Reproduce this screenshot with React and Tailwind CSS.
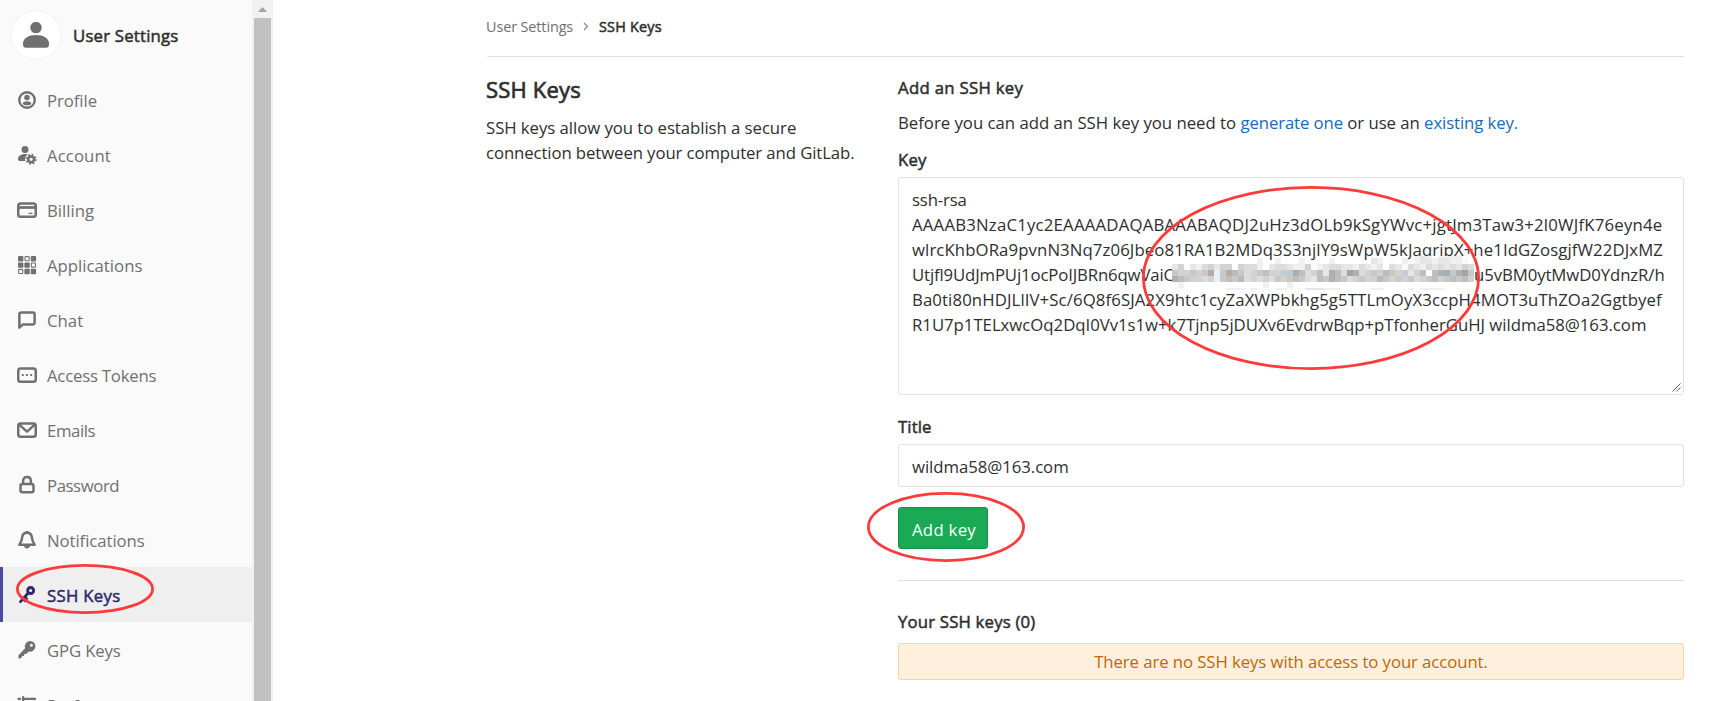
import React from 'react';

const stroke = { fill: 'none', stroke: 'currentColor', strokeWidth: 2, strokeLinecap: 'round', strokeLinejoin: 'round' };

const icons = {
  profile: (
    <>
      <circle cx="8" cy="8" r="6.2" {...stroke} strokeWidth="1.9" />
      <circle cx="8" cy="5.9" r="2.2" fill="currentColor" />
      <path d="M8 8.9c2 0 3.400.8 3.400 1.800 0 .9-1.500 1.500-3.400 1.500s-3.400-.6-3.400-1.500c0-1 1.400-1.800 3.400-1.800z" fill="currentColor" />
    </>
  ),
  account: (
    <>
      <circle cx="6.4" cy="3.5" r="2.8" fill="currentColor" />
      <path d="M6.9 7.2C3.4 7.2.8 8.7.8 11.2c0 1.100.8 1.600 1.800 1.600h4.100c-.8-2 .1-4.300 1.900-5.300z" fill="currentColor" />
      <circle cx="11.300" cy="11.400" r="2.300" fill="none" stroke="currentColor" strokeWidth="2" />
      <circle cx="11.300" cy="11.400" r="3.700" fill="none" stroke="currentColor" strokeWidth="1.400" strokeDasharray="1.450 1.450" />
    </>
  ),
  billing: (
    <>
      <rect x="1" y="2.700" width="14" height="10.600" rx="1.800" {...stroke} />
      <path d="M1 6h14" stroke="currentColor" strokeWidth="2.200" />
      <path d="M9.200 10.700h3.200" stroke="currentColor" strokeWidth="1" />
    </>
  ),
  applications: (
    <>
      {[[0, 0], [2, 0], [0, 1], [1, 1], [1, 2], [2, 2]].map(([c, r]) => (
        <rect key={`${c}${r}`} x={0.8 + c * 5.1} y={0.8 + r * 5.1} width="4.300" height="4.300" rx=".8" fill="currentColor" />
      ))}
      {[[1, 0], [2, 1], [0, 2]].map(([c, r]) => (
        <rect key={`${c}${r}`} x={1.3 + c * 5.1} y={1.3 + r * 5.1} width="3.300" height="3.300" rx=".6" fill="none" stroke="currentColor" strokeWidth=".9" />
      ))}
    </>
  ),
  chat: <path d="M3.500 1.900h9.100c.9 0 1.500.6 1.500 1.500v6.600c0 .9-.6 1.500-1.500 1.500H4.700l-2.800 2.600V3.400c0-.9.7-1.500 1.600-1.500z" {...stroke} />,
  tokens: (
    <>
      <rect x="1" y="2.700" width="14" height="10.600" rx="1.800" {...stroke} />
      <path d="M3.900 8h1.500M7.250 8h1.500M10.600 8h1.500" stroke="currentColor" strokeWidth="1.500" />
    </>
  ),
  mail: (
    <>
      <rect x="1" y="2.700" width="14" height="10.600" rx="1.800" {...stroke} />
      <path d="M1.800 3.700L8 9.300l6.200-5.600" {...stroke} />
    </>
  ),
  lock: (
    <>
      <rect x="2.800" y="7.200" width="10.400" height="6.600" rx="1.600" {...stroke} />
      <path d="M4.900 7V4.800c0-2 1.200-3.200 3.100-3.200s3.100 1.200 3.100 3.200V7" {...stroke} />
    </>
  ),
  bell: (
    <>
      <path d="M8 2.200C5.700 2.200 4.300 3.700 4.100 6c-.2 2.400-.9 3.800-2.200 5.700h12.200C12.800 9.800 12.100 8.400 11.900 6 11.700 3.700 10.300 2.200 8 2.200z" {...stroke} />
      <path d="M5.600 12.600h4.800c0 1.300-1.100 2.200-2.400 2.200s-2.400-.9-2.400-2.200zM6.800 1.700a1.200 1.200 0 0 1 2.400 0z" fill="currentColor" />
    </>
  ),
  key: (
    <>
      <circle cx="10.900" cy="4.400" r="2.400" {...stroke} strokeWidth="2.300" />
      <path d="M9.200 6.200L2.800 13.300" {...stroke} strokeWidth="2.300" />
      <path d="M4.700 11.600l1.700 1.500M6.500 9.700l1.600 1.300" {...stroke} strokeWidth="1.600" />
    </>
  ),
  keyFilled: (
    <path fillRule="evenodd" d="M10.600.7a4.300 4.300 0 1 1-1.100 8.500L7.300 11.200H5.700v1.600H4.100l-.5 1.300-1 .6H1.200v-2.600l5.300-5.600A4.400 4.400 0 0 1 10.600.7zM11.500 3a1.200 1.200 0 1 0 0 2.400 1.200 1.200 0 0 0 0-2.400z" fill="currentColor" />
  ),
  preferences: (
    <>
      <path d="M1.200 3h1.300M5 3h9.500M1.200 8h8.500M12 8h2.500M1.200 13h1.300M5 13h9.500" {...stroke} strokeWidth="1.800" />
      <path d="M4.900 1.700v2.600M11.300 6.700v2.600M4.900 11.700v2.600" {...stroke} strokeWidth="1.800" />
    </>
  ),
};

const items = [
  ['profile', 'Profile', 'tracking-[-0.07px]'],
  ['account', 'Account', 'tracking-[0.1px]'],
  ['billing', 'Billing', 'tracking-[0px]'],
  ['applications', 'Applications', 'tracking-[0px]'],
  ['chat', 'Chat', 'tracking-[0px]'],
  ['tokens', 'Access Tokens', 'tracking-[-0.22px]'],
  ['mail', 'Emails', 'tracking-[-0.4px]'],
  ['lock', 'Password', 'tracking-[-0.42px]'],
  ['bell', 'Notifications', 'tracking-[-0.07px]'],
  ['key', 'SSH Keys', 'tracking-[0.3px]'],
  ['keyFilled', 'GPG Keys', 'tracking-[-0.15px]'],
  ['preferences', 'Preferences', 'tracking-[-0.1px]'],
];

const palette = {
  a: '#fafafa', b: '#f0f0f0', c: '#e6e6e6', d: '#dcdcdc', e: '#d2d2d2', f: '#c8c8c8', g: '#bebebe', h: '#b0b0b4', i: '#a5a3a8',
  n: '#bcaaa0', s: '#c3ccd4', t: '#9fb1bb', w: '#e6f1fb', v: '#b9bac4', y: '#d8d2c8', z: '#ffffff',
};

// One string per row of blocks, one letter per block.
const mosaic = [
  '........................................bcb.bbbb..',
  'z.............b..b...b....bzz....cb.azb.bccbccbba.',
  'ceacbdeceezeddbzcddcbbeabcddccbdcbczdcadcbdcdcdced',
  'feefefnwfnvfdefgeesftgdegchgdihdefevfyscegzghtfhif',
  'hgfeedewfgfvdededfyfgfdcgfhgfdefeevfysefdyfgefgfge',
  'ab.............b...b..............................',
  '.........bbb.b...bb...cccbbb.....bb....b.bbbb.....',
];

const rowTop = [4, 6, 12, 18, 24, 30, 36];
const rowHeight = [2, 6, 6, 6, 6, 6, 2];

function Mosaic() {
  return (
    <svg className="mt-[-10px] h-[38px] w-[302px] shrink-0" viewBox="0 0 302 38">
      <defs>
        <clipPath id="strip"><rect x="0" y="0" width="302" height="38" rx="10" /></clipPath>
      </defs>
      <g clipPath="url(#strip)" shapeRendering="crispEdges">
        {mosaic.map((row, r) =>
          row.split('').map((k, c) =>
            palette[k] ? <rect key={`${r}-${c}`} x={c * 6.04} y={rowTop[r]} width="6.1" height={rowHeight[r]} fill={palette[k]} /> : null,
          ),
        )}
      </g>
    </svg>
  );
}

function Ring({ className, w, h }) {
  return (
    <svg className={className} viewBox={`0 0 ${w} ${h}`}>
      <ellipse cx={w / 2} cy={h / 2} rx={w / 2 - 1.4} ry={h / 2 - 1.4} fill="none" stroke="#fe3a3a" strokeWidth="2.8" />
    </svg>
  );
}

const semi = '[-webkit-text-stroke:0.5px_currentColor]';

export default function App() {
  return (
    <div className="relative flex h-[701px] w-[1711px] overflow-hidden bg-white font-['Open_Sans','Noto_Sans',sans-serif] text-[16.75px] leading-[25px] text-[#2e2e2e]">
      <aside className="flex w-[273px] shrink-0">
        <nav className="w-[252px] bg-[#fafafa]">
          <div className="flex h-[72px] items-start gap-[13px] pt-[11px] pl-3">
            <div className="flex size-12 items-center justify-center rounded-full bg-white text-[#707070] ring-1 ring-black/3">
              <svg className="size-[26px]" viewBox="0 0 26 26" fill="currentColor">
                <circle cx="13" cy="5.6" r="5.7" />
                <path d="M13 13c7.200 0 13 3.400 13 8.200v1.600c0 2-1.300 3-3 3H3c-1.700 0-3-1-3-3v-1.600C0 16.400 5.800 13 13 13z" />
              </svg>
            </div>
            <div className={`mt-3 ${semi} tracking-[0.2px]`}>User Settings</div>
          </div>
          <ul>
            {items.map(([icon, label, track]) => {
              const active = label === 'SSH Keys';
              return (
                <li
                  key={label}
                  className={`flex h-[55px] items-start border-l-3 pl-[14px] ${active ? 'border-[#4b4ba3] bg-[#efefef] text-[#2f2a6b]' : 'border-transparent text-[#707070]'}`}
                >
                  <svg className="mt-[18px] size-5 shrink-0" viewBox="0 0 16 16">{icons[icon]}</svg>
                  <span className={`mt-4 ml-2.5 ${track} ${active ? semi : ''}`}>{label}</span>
                </li>
              );
            })}
          </ul>
        </nav>
        <div className="flex w-[21px] flex-col items-center bg-[#f1f1f1]">
          <div className="flex h-[18px] shrink-0 items-center">
            <svg className="h-[5px] w-[9px]" viewBox="0 0 9 5"><path d="M0 5L4.500 0L9 5z" fill="#a3a3a3" /></svg>
          </div>
          <div className="w-[17px] flex-1 bg-[#c1c1c1]" />
        </div>
      </aside>

      <main className="flex-1 pr-[27px] pl-[213px]">
        <div className="ml-px flex h-[57px] items-start border-b border-[#e1e1e1] pt-3.5 text-[14.4px]">
          <span className="-ml-px w-[97px] text-[#707070] tracking-[-0.1px]">User Settings</span>
          <svg className="mt-2 mr-[10px] h-[9px] w-[6px]" viewBox="0 0 6 9"><path d="M1 1l3.500 3.500L1 8" fill="none" stroke="#8a8a8a" strokeWidth="1.300" /></svg>
          <span className={`${semi} tracking-[0.2px]`}>SSH Keys</span>
        </div>

        <div className="flex">
          <section className="w-[412px] shrink-0 pt-[17px]">
            <h1 className="text-[22px] leading-[30px] tracking-[0.2px] [-webkit-text-stroke:0.7px_currentColor]">SSH Keys</h1>
            <p className="mt-[11px] whitespace-nowrap">
              <span className="block tracking-[-0.05px]">SSH keys allow you to establish a secure</span>
              <span className="block tracking-[-0.1px]">connection between your computer and GitLab.</span>
            </p>
          </section>

          <section className="flex-1 pt-[18px]">
            <h2 className={`${semi} tracking-[0.3px]`}>Add an SSH key</h2>
            <p className="mt-2.5 flex whitespace-pre">
              <span className="tracking-[-0.01px]">Before you can add an SSH key you need to </span>
              <a className="text-[#1b69b6] tracking-[-0.11px]">generate one</a>
              <span className="tracking-[-0.04px]"> or use an </span>
              <a className="text-[#1b69b6] tracking-[-0.1px]">existing key.</a>
            </p>
            <h3 className={`mt-3 ${semi} tracking-[0.2px]`}>Key</h3>
            <div className="relative mt-[5px] h-[218px] rounded-[3px] border border-[#e3e3e3] px-[13px] py-[9px] whitespace-nowrap">
              <div className="tracking-[-0.15px]">ssh-rsa</div>
              <div className="tracking-[0.21px]">AAAAB3NzaC1yc2EAAAADAQABAAABAQDJ2uHz3dOLb9kSgYWvc+jgtJm3Taw3+2l0WJfK76eyn4e</div>
              <div className="tracking-[0.1px]">wlrcKhbORa9pvnN3Nq7z06Jbeo81RA1B2MDq3S3njlY9sWpW5kJaqrjpX+he1IdGZosgjfW22DJxMZ</div>
              <div className="flex h-[25px]">
                <span className="w-[260px] tracking-[-0.14px]">Utjfl9UdJmPUj1ocPoIJBRn6qwVaiC</span>
                <Mosaic />
                <span className="tracking-[-0.09px]">u5vBM0ytMwD0YdnzR/h</span>
              </div>
              <div className="tracking-[0.11px]">Ba0ti80nHDJLlIV+Sc/6Q8f6SJA2X9htc1cyZaXWPbkhg5g5TTLmOyX3ccpH4MOT3uThZOa2Ggtbyef</div>
              <div className="tracking-[-0.02px]">R1U7p1TELxwcOq2DqI0Vv1s1w+k7Tjnp5jDUXv6EvdrwBqp+pTfonherGuHJ wildma58@163.com</div>
              <svg className="absolute right-[2px] bottom-[2px] size-[9px]" viewBox="0 0 9 9">
                <path d="M.5 8.500l8-8M4.500 8.500l4-4" stroke="#5f5f5f" strokeWidth="1" />
              </svg>
            </div>
            <h3 className={`mt-[19px] ${semi} tracking-[0.1px]`}>Title</h3>
            <div className="mt-[5px] h-[43px] rounded-[3px] border border-[#e3e3e3] px-[13px] pt-[9px] tracking-[-0.05px]">wildma58@163.com</div>
            <button className="mt-5 flex h-[42px] w-[90px] items-start rounded-[3px] border border-[#168f48] bg-[#1aaa55] pt-[9px] pl-[13px] whitespace-nowrap text-white tracking-[0.28px]">
              Add key
            </button>
            <hr className="mt-[31px] border-t border-[#e1e1e1]" />
            <h3 className={`mt-7 ${semi} tracking-[0.18px]`}>Your SSH keys (0)</h3>
            <div className="mt-[9px] h-[37px] rounded-[3px] border border-[#fdd39b] bg-[#fff0dd] pt-[5px] text-center text-[#c26700] tracking-[-0.08px]">
              There are no SSH keys with access to your account.
            </div>
          </section>
        </div>
      </main>

      <Ring className="absolute top-[564px] left-4 h-[50px] w-[138px]" w={138} h={50} />
      <Ring className="absolute top-[186px] left-[1142px] h-[184px] w-[338px]" w={338} h={184} />
      <Ring className="absolute top-[492px] left-[867px] h-[70px] w-[158px]" w={158} h={70} />
    </div>
  );
}
